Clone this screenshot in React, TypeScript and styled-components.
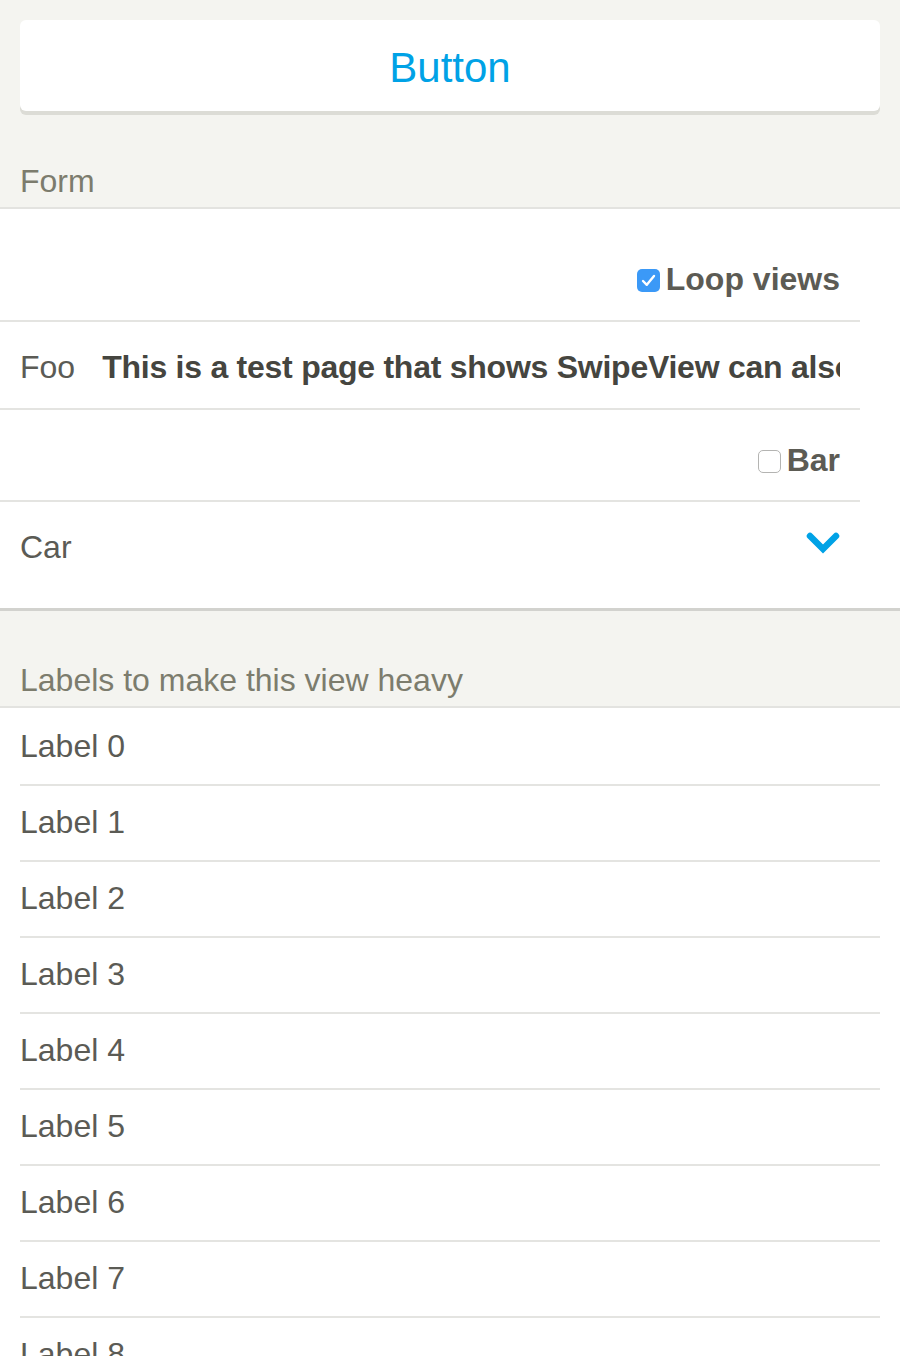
import React from "react";
import styled, { createGlobalStyle } from "styled-components";

const GlobalStyle = createGlobalStyle`
  html, body {
    margin: 0;
    padding: 0;
    background: #f4f4f0;
  }
  body {
    font-family: "Liberation Sans", Arial, Helvetica, sans-serif;
    -webkit-font-smoothing: antialiased;
  }
`;

const LABELS = Array.from({ length: 9 }, (_, i) => `Label ${i}`);

const Page = styled.div`
  width: 900px;
  height: 1356px;
  overflow: hidden;
  padding-top: 20px;
  box-sizing: border-box;
`;

const BigButton = styled.button`
  display: block;
  width: 860px;
  height: 91px;
  margin: 0 20px;
  padding: 4px 0 0;
  border: none;
  border-radius: 6px;
  background: #ffffff;
  box-shadow: 0 4px 0 #dcdcd6;
  color: #00a2e6;
  font-family: "Liberation Sans", Arial, sans-serif;
  font-size: 42px;
  line-height: 48px;
  cursor: pointer;
`;

const SectionHeader = styled.div<{ $height: number }>`
  height: ${(p) => p.$height}px;
  display: flex;
  align-items: flex-end;
  padding: 0 20px 8px;
  box-sizing: border-box;
  color: #7c7c6d;
  font-size: 32px;
  line-height: 36px;
`;

const Section = styled.div`
  background: #ffffff;
  border-top: 2px solid #e3e3e0;
`;

const FormSection = styled(Section)`
  border-bottom: 3px solid #d2d2ce;
`;

const LabelList = styled(Section)`
  padding-top: 2px;
`;

const FormRow = styled.div<{ $height: number; $top: number; $last?: boolean }>`
  height: ${(p) => p.$height}px;
  margin-right: 40px;
  padding: ${(p) => p.$top}px 20px 0;
  box-sizing: border-box;
  display: flex;
  align-items: flex-start;
  border-bottom: ${(p) => (p.$last ? "none" : "2px solid #e4e4e1")};
  font-size: 32px;
  line-height: 36px;
`;

const RightGroup = styled.label`
  margin-left: auto;
  display: flex;
  align-items: center;
  gap: 6px;
  color: #5c5b54;
  font-weight: bold;
`;

const Box = styled.span<{ $checked?: boolean }>`
  width: 23px;
  height: 23px;
  box-sizing: border-box;
  border-radius: 5px;
  display: flex;
  align-items: center;
  justify-content: center;
  margin-top: 2px;
  background: ${(p) => (p.$checked ? "#3b99f7" : "#ffffff")};
  border: ${(p) => (p.$checked ? "none" : "1.5px solid #b4b4b2")};
`;

const FieldLabel = styled.span`
  color: #5b5b55;
  flex-shrink: 0;
`;

const FieldInput = styled.input`
  flex: 1;
  min-width: 0;
  margin-left: 27px;
  padding: 0;
  border: none;
  outline: none;
  background: transparent;
  color: #45453f;
  font-family: "Liberation Sans", Arial, sans-serif;
  font-weight: bold;
  font-size: 32px;
  line-height: 36px;
  letter-spacing: -0.25px;
  height: 36px;
`;

const Chevron = styled.svg`
  margin-left: auto;
  margin-top: 2px;
`;

const LabelItem = styled.div`
  height: 76px;
  margin: 0 20px;
  padding-top: 18px;
  box-sizing: border-box;
  border-bottom: 2px solid #e4e4e1;
  color: #5b5b55;
  font-size: 32px;
  line-height: 36px;
`;

const Check = ({ checked }: { checked?: boolean }) => (
  <Box $checked={checked}>
    {checked && (
      <svg width="15" height="13" viewBox="0 0 15 13">
        <path
          d="M2 7 L5.8 10.8 L13 2"
          fill="none"
          stroke="#ffffff"
          strokeWidth="2.4"
          strokeLinecap="round"
          strokeLinejoin="round"
        />
      </svg>
    )}
  </Box>
);

export default function App() {
  return (
    <>
      <GlobalStyle />
      <Page>
        <BigButton>Button</BigButton>

        <SectionHeader $height={96}>Form</SectionHeader>
        <FormSection>
          <FormRow $height={113} $top={52}>
            <RightGroup>
              <Check checked />
              Loop views
            </RightGroup>
          </FormRow>
          <FormRow $height={88} $top={27}>
            <FieldLabel>Foo</FieldLabel>
            <FieldInput
              readOnly
              value="This is a test page that shows SwipeView can also handle forms"
            />
          </FormRow>
          <FormRow $height={92} $top={32}>
            <RightGroup>
              <Check />
              Bar
            </RightGroup>
          </FormRow>
          <FormRow $height={106} $top={27} $last>
            <FieldLabel>Car</FieldLabel>
            <Chevron width="34" height="24" viewBox="0 0 34 24">
              <path
                d="M4 5 L17 18 L30 5"
                fill="none"
                stroke="#00a2e6"
                strokeWidth="6.5"
                strokeLinecap="round"
                strokeLinejoin="miter"
              />
            </Chevron>
          </FormRow>
        </FormSection>

        <SectionHeader $height={95}>Labels to make this view heavy</SectionHeader>
        <LabelList>
          {LABELS.map((label) => (
            <LabelItem key={label}>{label}</LabelItem>
          ))}
        </LabelList>
      </Page>
    </>
  );
}
